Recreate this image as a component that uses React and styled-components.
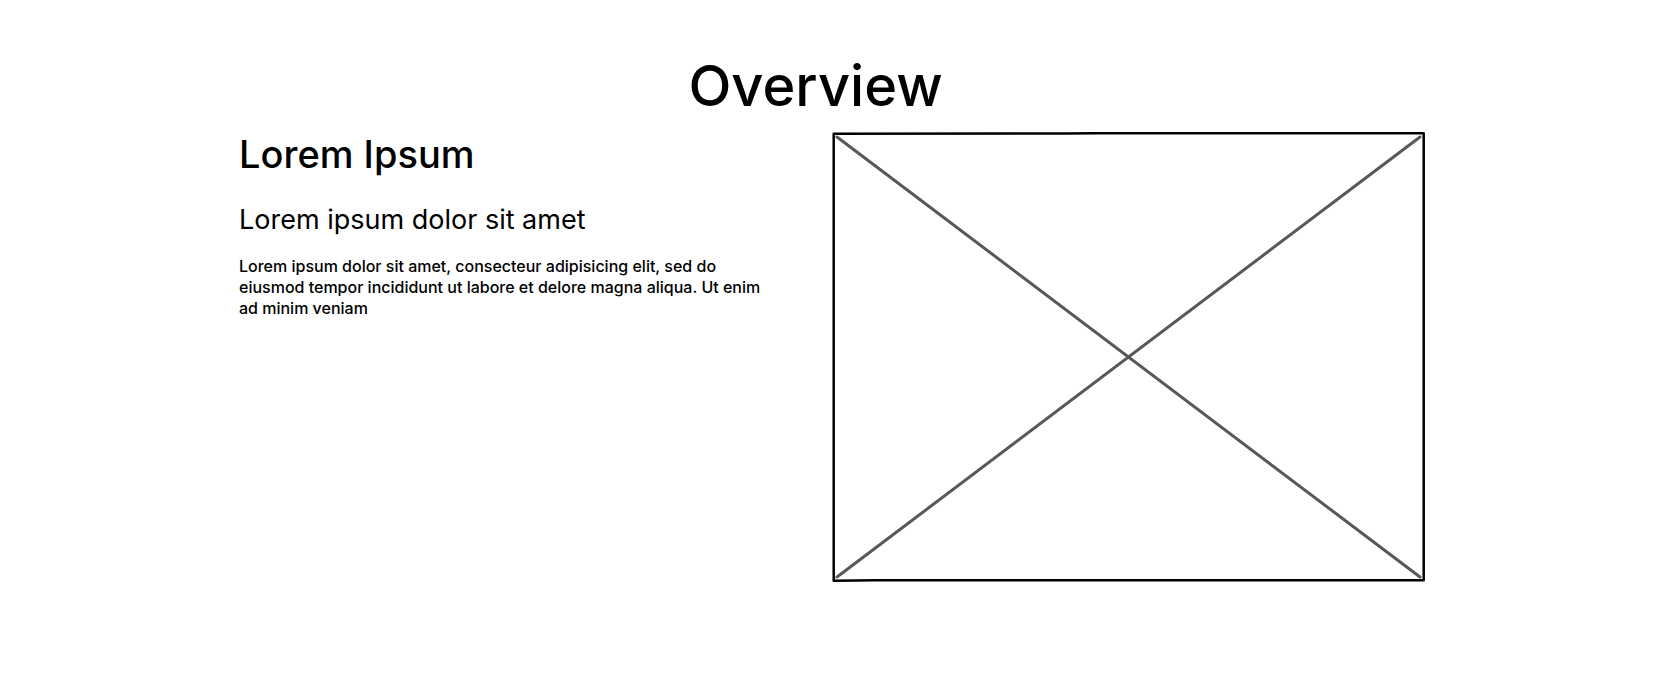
import React from "react";
import styled, { createGlobalStyle } from "styled-components";

const GlobalStyle = createGlobalStyle`
  *, *::before, *::after { box-sizing: border-box; }
  body {
    margin: 0;
    background: #fff;
    color: #000;
    font-family: Inter, "Liberation Sans", sans-serif;
    font-weight: 500;
  }
`;

const Section = styled.section`
  max-width: 1235px;
  margin: 0 auto;
  padding: 48px 24px 92px;
`;

const Title = styled.h1`
  margin: 0;
  padding-right: 32px;
  font-size: 56px;
  font-weight: 500;
  line-height: 76px;
  text-align: center;
`;

const Columns = styled.div`
  display: grid;
  grid-template-columns: repeat(2, minmax(0, 1fr));
  gap: 1px;
  margin-top: 8px;
`;

const Copy = styled.div`
  padding: 0 64px 0 1px;
`;

const Heading = styled.h2`
  margin: 0;
  font-size: 38px;
  font-weight: 500;
  line-height: 44px;
`;

const Subheading = styled.h3`
  margin: 28px 0 0;
  font-size: 27px;
  font-weight: 400;
  line-height: 32px;
`;

const Text = styled.p`
  margin: 20px 0 0;
  font-size: 16px;
  line-height: 21px;
`;

const Placeholder = styled.svg`
  display: block;
  width: 100%;
  height: auto;
`;

export default function App() {
  return (
    <>
      <GlobalStyle />
      <Section>
        <Title>Overview</Title>
        <Columns>
          <Copy>
            <Heading>Lorem Ipsum</Heading>
            <Subheading>Lorem ipsum dolor sit amet</Subheading>
            <Text>
              Lorem ipsum dolor sit amet, consecteur adipisicing elit, sed do
              eiusmod tempor incididunt ut labore et delore magna aliqua. Ut
              enim ad minim veniam
            </Text>
          </Copy>
          <Placeholder viewBox="0 0 593 450" role="img" aria-label="Image placeholder" fill="none" strokeLinecap="round">
            <path d="M5 5 588 445M588 5 5 445" stroke="#585858" strokeWidth="3" />
            <path
              d="M1.7 1.7 235 1.6 262 1.3 591.7 1.3 591.7 448.3 44 448.3 1.7 448.7Z"
              stroke="#000"
              strokeWidth="2.5"
              strokeLinejoin="round"
            />
          </Placeholder>
        </Columns>
      </Section>
    </>
  );
}
